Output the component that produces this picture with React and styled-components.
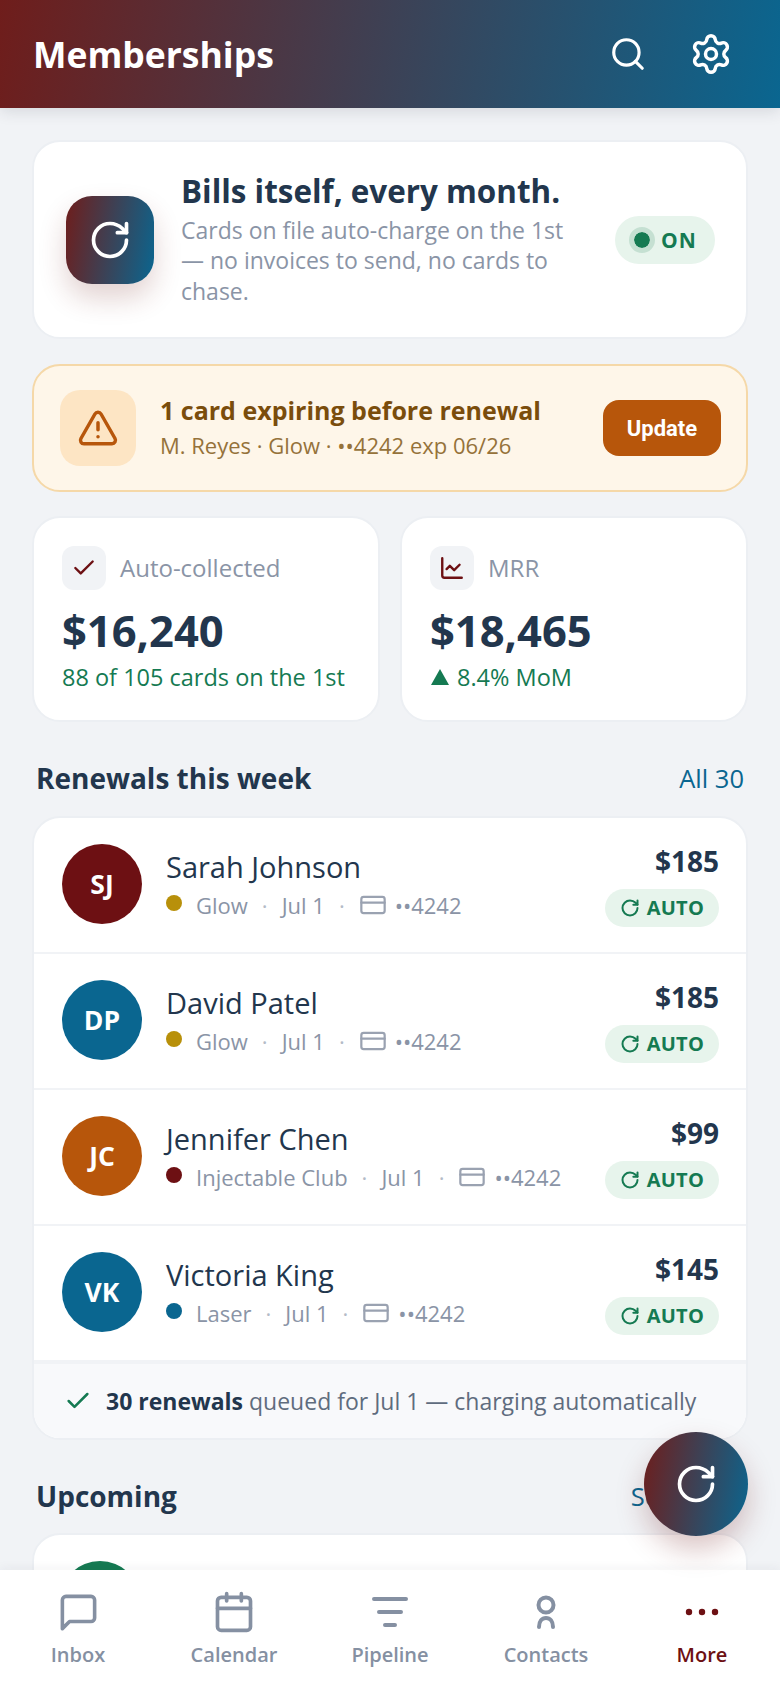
import React from "react";
import styled, { createGlobalStyle } from "styled-components";
import { Search, Settings, RotateCw, TriangleAlert, Check, ChartLine, CreditCard } from "lucide-react";

const Global = createGlobalStyle`
  html, body { margin: 0; padding: 0; background: #f1f3f6; }
  * { box-sizing: border-box; }
  body { font-family: "Open Sans", "Noto Sans", sans-serif; color: #22364d; }
`;
const GRAD = "linear-gradient(100deg, #6f1d1b 0%, #0a6690 100%)";
const Phone = styled.div`position: relative; width: 780px; height: 1688px; overflow: hidden; display: flex; flex-direction: column; background: #f1f3f6;`;
const Header = styled.header`flex: none; height: 108px; background: ${GRAD}; display: flex; align-items: center; padding: 0 47px 0 33px; box-shadow: 0 4px 14px rgba(30,45,60,.12); position: relative; z-index: 2;`;
const Title = styled.h1`margin: 0; flex: 1; color: #fff; font-size: 35.5px; font-weight: 700;`;
const HeaderIcons = styled.div`display: flex; gap: 42px; color: #fff; align-items: center;`;
const Main = styled.main`flex: 1; min-height: 0; overflow: hidden; padding: 32px 32px 0; display: flex; flex-direction: column;`;
const Card = styled.section`background: #fff; border: 2px solid #eceff3; border-radius: 28px;`;
const Hero = styled(Card)`display: flex; align-items: center; height: 199px; padding: 0 31px 0 32px; gap: 27px; flex: none;`;
const HeroIcon = styled.div`flex: none; width: 88px; height: 88px; border-radius: 26px; background: ${GRAD}; display: flex; align-items: center; justify-content: center; color: #fff; box-shadow: 0 14px 28px rgba(111,29,27,.2);`;
const HeroText = styled.div`flex: 1; min-width: 0; padding: 0 6px 3px 0;`;
const HeroTitle = styled.div`font-size: 31.4px; font-weight: 700; line-height: 42px; color: #22364d; margin-bottom: 3px; white-space: nowrap;`;
const HeroSub = styled.div`font-size: 23px; line-height: 30.5px; color: #8a94a6;`;
const OnPill = styled.div`flex: none; display: flex; align-items: center; gap: 6px; height: 48px; width: 100px; padding: 0 0 0 14px; border-radius: 24px; background: #e7f4ec; color: #157a52; font-size: 21px; font-weight: 700; letter-spacing: 1px;`;
const OnDot = styled.span`width: 26px; height: 26px; border-radius: 50%; background: #157a52; border: 5px solid #c5e0d2; background-clip: padding-box;`;
const Alert = styled.section`flex: none; margin-top: 25px; height: 128px; background: #fef6e9; border: 2px solid #f5d8a8; border-radius: 28px; display: flex; align-items: center; padding: 0 25px 0 26px; gap: 24px;`;
const AlertIcon = styled.div`flex: none; width: 76px; height: 76px; border-radius: 20px; background: #fde5c4; color: #b7560b; display: flex; align-items: center; justify-content: center;`;
const AlertText = styled.div`flex: 1; min-width: 0; padding-bottom: 2px;`;
const AlertTitle = styled.div`font-size: 25px; font-weight: 700; color: #7a4d0c; line-height: 36px;`;
const AlertSub = styled.div`font-size: 22px; color: #95723a; line-height: 34px;`;
const UpdateBtn = styled.button`flex: none; width: 118px; height: 56px; border: 0; border-radius: 16px; background: #b7560b; color: #fff; font-family: "Roboto", sans-serif; font-size: 22px; font-weight: 700;`;
const Stats = styled.div`flex: none; margin-top: 24px; display: grid; grid-template-columns: 1fr 1fr; gap: 20px;`;
const Stat = styled(Card)`height: 206px; padding: 28px;`;
const StatHead = styled.div`display: flex; align-items: center; gap: 14px; font-size: 24px; font-weight: 500; color: #8a94a6; line-height: 44px;`;
const StatIcon = styled.span`flex: none; width: 44px; height: 44px; border-radius: 12px; background: #f1f3f6; color: #6d1013; display: flex; align-items: center; justify-content: center;`;
const StatValue = styled.div`margin-top: 13px; font-size: 43.5px; font-weight: 700; line-height: 56px; color: #22364d;`;
const StatSub = styled.div`margin-top: 1px; font-size: 23.5px; font-weight: 500; line-height: 34px; color: #157a52; display: flex; align-items: center; gap: 8px;`;
const Triangle = styled.span`margin-left: 1px; width: 0; height: 0; border-left: 9px solid transparent; border-right: 9px solid transparent; border-bottom: 16px solid #157a52;`;
const SectionHead = styled.div`flex: none; display: flex; justify-content: space-between; align-items: center; height: 40px; margin: ${p => p.$top}px 4px ${p => p.$bottom}px 4px;`;
const SectionTitle = styled.h2`margin: 0; font-size: 28px; font-weight: 700; color: #22364d;`;
const SectionLink = styled.span`font-size: 25.5px; color: #0a6690;`;
const List = styled(Card)`flex: none; overflow: hidden;`;
const Row = styled.div`height: 136px; display: flex; align-items: center; padding: 0 27px 2px 28px; gap: 24px; border-bottom: 2px solid #f1f3f6;`;
const Avatar = styled.div`flex: none; width: 80px; height: 80px; border-radius: 50%; background: ${p => p.$c}; color: #fff; font-size: 26.5px; font-weight: 700; display: flex; align-items: center; justify-content: center;`;
const RowMain = styled.div`flex: 1; min-width: 0;`;
const RowName = styled.div`font-size: 29px; font-weight: 500; line-height: 40px; color: #22364d;`;
const Meta = styled.div`display: flex; align-items: center; font-size: 22px; line-height: 34px; color: #8a94a6; margin-top: 1px;`;
const Dot = styled.span`width: 16px; height: 16px; border-radius: 50%; background: ${p => p.$c}; margin-right: 14px; position: relative; top: -2px;`;
const Sep = styled.span`margin: 0 14px; color: #b4bbc7;`;
const CardSvg = styled.span`display: flex; margin-right: 8px; color: #9aa2b1;`;
const RowRight = styled.div`flex: none; display: flex; flex-direction: column; align-items: flex-end; gap: 9px;`;
const Amount = styled.div`font-size: 28px; font-weight: 700; line-height: 38px; color: #22364d;`;
const AutoPill = styled.div`display: flex; align-items: center; gap: 7px; height: 38px; padding: 0 15px; border-radius: 19px; background: #e7f4ec; color: #157a52; font-size: 20px; font-weight: 700; letter-spacing: .2px;`;
const Footer = styled.div`height: 76px; border-top: 2px solid #f1f3f6; background: #f8f9fb; display: flex; align-items: center; padding: 0 30px; gap: 14px; font-size: 23px; color: #5f6c7e;`;
const Strong = styled.strong`color: #22364d; font-weight: 700;`;
const UpCard = styled(Card)`flex: none; height: 120px; padding: 26px;`;
const UpAvatar = styled.div`width: 80px; height: 80px; border-radius: 50%; background: #157a52;`;
const Fab = styled.button`position: absolute; left: 644px; top: 1432px; width: 104px; height: 104px; border: 0; border-radius: 50%; background: ${GRAD}; color: #fff; display: flex; align-items: center; justify-content: center; box-shadow: 0 14px 28px rgba(111,29,27,.25); z-index: 3;`;
const Nav = styled.nav`flex: none; height: 118px; background: #fff; display: grid; grid-template-columns: repeat(5, 1fr); box-shadow: 0 -2px 10px rgba(30,45,60,.05); position: relative; z-index: 2; padding: 18px 0 0;`;
const NavItem = styled.div`display: flex; flex-direction: column; align-items: center; color: ${p => p.$active ? "#6d1013" : "#8590a2"};`;
const NavIcon = styled.div`height: 48px; display: flex; align-items: center; justify-content: center;`;
const NavLabel = styled.div`margin-top: 4px; font-size: 20px; font-weight: 600; line-height: 30px;`;

const Refresh = ({ size, w = 2 }) => <RotateCw size={size} strokeWidth={w} />;
const rows = [
  { i: "SJ", c: "#6d1013", n: "Sarah Johnson", d: "#b8900a", p: "Glow", a: "$185" },
  { i: "DP", c: "#0a6690", n: "David Patel", d: "#b8900a", p: "Glow", a: "$185" },
  { i: "JC", c: "#b7560b", n: "Jennifer Chen", d: "#6d1013", p: "Injectable Club", a: "$99" },
  { i: "VK", c: "#0a6690", n: "Victoria King", d: "#0a6690", p: "Laser", a: "$145" },
];
const Inbox = () => (
  <svg width="43" height="43" viewBox="0 0 24 24" fill="none" stroke="currentColor" strokeWidth="2" strokeLinecap="round" strokeLinejoin="round"><path d="M21 15a2 2 0 0 1-2 2H7l-4 4V5a2 2 0 0 1 2-2h14a2 2 0 0 1 2 2z" /></svg>
);
const CalendarIcon = () => (
  <svg width="44" height="44" viewBox="0 0 24 24" fill="none" stroke="currentColor" strokeWidth="2" strokeLinecap="round" strokeLinejoin="round"><rect x="3" y="4" width="18" height="18" rx="2" /><path d="M16 2v4M8 2v4M3 10h18" /></svg>
);
const FilterIcon = () => (
  <svg width="40" height="36" viewBox="0 0 40 36" fill="none" stroke="currentColor" strokeWidth="4" strokeLinecap="round"><path d="M4 5h32M9 18h22M15 31h10" /></svg>
);
const PersonIcon = () => (
  <svg width="24" height="36" viewBox="0 0 24 36" fill="none" stroke="currentColor" strokeWidth="4" strokeLinecap="round"><circle cx="12" cy="11" r="7.5" /><path d="M5 33c0-6 3-9 7-9s7 3 7 9" /></svg>
);
const DotsIcon = () => (
  <svg width="36" height="10" viewBox="0 0 36 10" fill="currentColor"><circle cx="5" cy="5" r="3.2" /><circle cx="18" cy="5" r="3.2" /><circle cx="31" cy="5" r="3.2" /></svg>
);
export default function App() {
  return (
    <Phone>
      <Global />
      <Header>
        <Title>Memberships</Title>
        <HeaderIcons><Search size={38} strokeWidth={2} /><Settings size={44} strokeWidth={1.9} /></HeaderIcons>
      </Header>
      <Main>
        <Hero>
          <HeroIcon><Refresh size={44} /></HeroIcon>
          <HeroText>
            <HeroTitle>Bills itself, every month.</HeroTitle>
            <HeroSub>Cards on file auto-charge on the 1st — no invoices to send, no cards to chase.</HeroSub>
          </HeroText>
          <OnPill><OnDot />ON</OnPill>
        </Hero>
        <Alert>
          <AlertIcon><TriangleAlert size={42} strokeWidth={2} /></AlertIcon>
          <AlertText>
            <AlertTitle>1 card expiring before renewal</AlertTitle>
            <AlertSub>M. Reyes · Glow · ••4242 exp 06/26</AlertSub>
          </AlertText>
          <UpdateBtn>Update</UpdateBtn>
        </Alert>
        <Stats>
          <Stat>
            <StatHead><StatIcon><Check size={26} strokeWidth={2.2} /></StatIcon>Auto-collected</StatHead>
            <StatValue>$16,240</StatValue>
            <StatSub>88 of 105 cards on the 1st</StatSub>
          </Stat>
          <Stat>
            <StatHead><StatIcon><ChartLine size={26} strokeWidth={2.2} /></StatIcon>MRR</StatHead>
            <StatValue>$18,465</StatValue>
            <StatSub><Triangle />8.4% MoM</StatSub>
          </Stat>
        </Stats>
        <SectionHead $top={36} $bottom={18}><SectionTitle>Renewals this week</SectionTitle><SectionLink>All 30</SectionLink></SectionHead>
        <List>
          {rows.map(r => (
            <Row key={r.i}>
              <Avatar $c={r.c}>{r.i}</Avatar>
              <RowMain>
                <RowName>{r.n}</RowName>
                <Meta><Dot $c={r.d} />{r.p}<Sep>·</Sep>Jul 1<Sep>·</Sep><CardSvg><CreditCard size={28} strokeWidth={1.9} /></CardSvg>••4242</Meta>
              </RowMain>
              <RowRight>
                <Amount>{r.a}</Amount>
                <AutoPill><Refresh size={20} w={2.4} />AUTO</AutoPill>
              </RowRight>
            </Row>
          ))}
          <Footer><Check size={28} color="#157a52" strokeWidth={2.2} /><span><Strong>30 renewals</Strong> queued for Jul 1 — charging automatically</span></Footer>
        </List>
        <SectionHead $top={36} $bottom={17}><SectionTitle>Upcoming</SectionTitle><SectionLink>See plans</SectionLink></SectionHead>
        <UpCard><UpAvatar /></UpCard>
      </Main>
      <Fab><Refresh size={44} /></Fab>
      <Nav>
        <NavItem><NavIcon><Inbox /></NavIcon><NavLabel>Inbox</NavLabel></NavItem>
        <NavItem><NavIcon><CalendarIcon /></NavIcon><NavLabel>Calendar</NavLabel></NavItem>
        <NavItem><NavIcon><FilterIcon /></NavIcon><NavLabel>Pipeline</NavLabel></NavItem>
        <NavItem><NavIcon><PersonIcon /></NavIcon><NavLabel>Contacts</NavLabel></NavItem>
        <NavItem $active><NavIcon><DotsIcon /></NavIcon><NavLabel>More</NavLabel></NavItem>
      </Nav>
    </Phone>
  );
}
